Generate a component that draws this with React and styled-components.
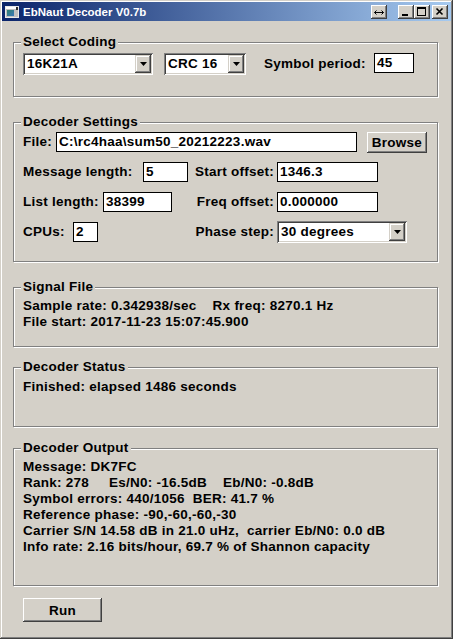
import React from 'react';
import styled, { createGlobalStyle } from 'styled-components';

const Global = createGlobalStyle`
  html, body { margin: 0; padding: 0; background: #d4d0c8; }
  body { font-family: "Liberation Sans", Arial, sans-serif; }
  * { box-sizing: border-box; }
`;

const Window = styled.div`
  width: 453px;
  height: 639px;
  background: #d4d0c8;
  padding: 2px;
  box-shadow: inset -1px -1px 0 #404040, inset 1px 1px 0 #d4d0c8,
    inset -2px -2px 0 #808080, inset 2px 2px 0 #ffffff;
  display: flex;
  flex-direction: column;
  font: bold 13.5px "Liberation Sans", Arial, sans-serif;
  letter-spacing: 0.25px;
  color: #000;
`;

const TitleBar = styled.div`
  height: 19px;
  flex-shrink: 0;
  background: linear-gradient(to right, #0a246a, #a6caf0);
  display: flex;
  align-items: center;
  padding: 0 3px 0 2px;
`;

const TitleText = styled.div`
  flex: 1;
  margin-left: 3px;
  color: #fff;
  font-size: 11.5px;
  letter-spacing: 0;
  white-space: nowrap;
`;

const CapBtn = styled.div`
  width: 16px;
  height: 14px;
  flex-shrink: 0;
  background: #d4d0c8;
  box-shadow: inset -1px -1px 0 #404040, inset 1px 1px 0 #ffffff,
    inset -2px -2px 0 #808080;
  margin-right: ${(p) => p.$gap || 0}px;
  display: flex;
`;

const Client = styled.div`
  flex: 1;
  padding: 0 13px 0 11px;
  display: flex;
  flex-direction: column;
`;

const Group = styled.div`
  position: relative;
  flex-shrink: 0;
  height: ${(p) => p.$h}px;
  margin-top: ${(p) => p.$mt}px;
  border: 1px solid #808080;
  box-shadow: inset 1px 1px 0 #fff, 1px 1px 0 #fff;
  padding: ${(p) => p.$pt}px 9px 0 9px;
`;

const Legend = styled.span`
  position: absolute;
  top: -9px;
  left: 7px;
  padding: 0 2px;
  background: #d4d0c8;
  line-height: 16px;
  white-space: nowrap;
`;

const Row = styled.div`
  display: flex;
  align-items: ${(p) => p.$align || 'center'};
  height: ${(p) => (p.$h ? `${p.$h}px` : 'auto')};
`;

const Cell = styled.div`
  display: flex;
  align-items: center;
  width: ${(p) => p.$w}px;
  flex-shrink: 0;
`;

const Label = styled.span`
  flex-shrink: 0;
  width: ${(p) => (p.$w ? `${p.$w}px` : 'auto')};
  margin-left: ${(p) => p.$ml || 0}px;
  margin-right: ${(p) => p.$mr || 0}px;
  text-align: ${(p) => (p.$right ? 'right' : 'left')};
  line-height: ${(p) => p.$lh || 16}px;
  white-space: pre;
`;

const TextBox = styled.div`
  width: ${(p) => p.$w}px;
  height: 20px;
  flex-shrink: 0;
  border: 1px solid #000;
  background: #fff;
  padding-left: 2px;
  line-height: 18px;
  white-space: nowrap;
  overflow: hidden;
`;

const Combo = styled.div`
  width: ${(p) => p.$w}px;
  height: 22px;
  flex-shrink: 0;
  margin-left: ${(p) => p.$ml || 0}px;
  background: #fff;
  padding: 2px;
  box-shadow: inset 1px 1px 0 #808080, inset -1px -1px 0 #fff,
    inset 2px 2px 0 #404040, inset -2px -2px 0 #d4d0c8;
  display: flex;
  align-items: center;
`;

const ComboText = styled.span`
  flex: 1;
  padding-left: 2px;
  line-height: 18px;
  white-space: nowrap;
`;

const ComboArrow = styled.div`
  width: 16px;
  height: 18px;
  flex-shrink: 0;
  background: #d4d0c8;
  box-shadow: inset -1px -1px 0 #404040, inset 1px 1px 0 #d4d0c8,
    inset -2px -2px 0 #808080, inset 2px 2px 0 #fff;
  display: flex;
  align-items: center;
  justify-content: center;
`;

const PushButton = styled.div`
  width: ${(p) => p.$w}px;
  height: ${(p) => p.$h}px;
  flex-shrink: 0;
  margin-left: ${(p) => p.$ml || 0}px;
  margin-top: ${(p) => p.$mt || 0}px;
  background: #d4d0c8;
  box-shadow: inset -1px -1px 0 #404040, inset 1px 1px 0 #ffffff,
    inset -2px -2px 0 #808080;
  display: flex;
  align-items: center;
  justify-content: center;
  white-space: nowrap;
`;

const Line = styled.div`
  line-height: 16px;
  white-space: pre;
`;

const AppIcon = () => (
  <svg width="16" height="16" viewBox="0 0 16 16">
    <rect x="1.5" y="2.5" width="13" height="11" fill="#c0c0c0" stroke="#e8e8e8" />
    <rect x="2" y="3" width="12" height="2" fill="#ffffff" />
    <defs>
      <linearGradient id="ig" x1="0" y1="0" x2="1" y2="1">
        <stop offset="0" stopColor="#2f7f6f" />
        <stop offset="1" stopColor="#3a78b8" />
      </linearGradient>
    </defs>
    <rect x="3" y="6" width="7" height="6" fill="url(#ig)" />
    <rect x="12" y="3" width="2" height="3" fill="#303030" />
  </svg>
);

const ArrowDown = () => (
  <svg width="7" height="4" viewBox="0 0 7 4">
    <polygon points="0,0 7,0 3.5,4" fill="#000" />
  </svg>
);

const GlyphResize = () => (
  <svg width="16" height="14" viewBox="0 0 16 14">
    <path d="M3.5 7.5h9" stroke="#000" strokeWidth="1" />
    <path d="M5.5 5.5L3.5 7.5L5.5 9.5M10.5 5.5L12.5 7.5L10.5 9.5" stroke="#000" strokeWidth="1" fill="none" />
  </svg>
);

const GlyphMin = () => (
  <svg width="16" height="14" viewBox="0 0 16 14">
    <rect x="4" y="9" width="6" height="2" fill="#000" />
  </svg>
);

const GlyphMax = () => (
  <svg width="16" height="14" viewBox="0 0 16 14">
    <rect x="3.5" y="2.5" width="8" height="8" fill="none" stroke="#000" />
    <rect x="3" y="2" width="9" height="2" fill="#000" />
  </svg>
);

const GlyphClose = () => (
  <svg width="16" height="14" viewBox="0 0 16 14">
    <path d="M4.5 3.5L10.5 9.5M10.5 3.5L4.5 9.5" stroke="#000" strokeWidth="1.6" />
  </svg>
);

export default function App() {
  return (
    <>
      <Global />
      <Window>
        <TitleBar>
          <AppIcon />
          <TitleText>EbNaut Decoder V0.7b</TitleText>
          <CapBtn $gap={11}><GlyphResize /></CapBtn>
          <CapBtn><GlyphMin /></CapBtn>
          <CapBtn $gap={2}><GlyphMax /></CapBtn>
          <CapBtn><GlyphClose /></CapBtn>
        </TitleBar>
        <Client>
          <Group $mt={21} $h={55} $pt={10}>
            <Legend>Select Coding</Legend>
            <Row $align="flex-start">
              <Combo $w={130}>
                <ComboText>16K21A</ComboText>
                <ComboArrow><ArrowDown /></ComboArrow>
              </Combo>
              <Combo $w={82} $ml={11}>
                <ComboText>CRC 16</ComboText>
                <ComboArrow><ArrowDown /></ComboArrow>
              </Combo>
              <Label $w={110} $ml={18} $lh={21}>Symbol period:</Label>
              <TextBox $w={40}>45</TextBox>
            </Row>
          </Group>

          <Group $mt={25} $h={140} $pt={4}>
            <Legend>Decoder Settings</Legend>
            <Row $h={30}>
              <Label $w={33}>File:</Label>
              <TextBox $w={301}>C:\rc4haa\sum50_20212223.wav</TextBox>
              <PushButton $w={60} $h={21} $ml={10}>Browse</PushButton>
            </Row>
            <Row $h={30}>
              <Cell $w={167}>
                <Label $w={120}>Message length:</Label>
                <TextBox $w={45}>5</TextBox>
              </Cell>
              <Label $w={84} $mr={3} $right>Start offset:</Label>
              <TextBox $w={101}>1346.3</TextBox>
            </Row>
            <Row $h={30}>
              <Cell $w={167}>
                <Label $w={80}>List length:</Label>
                <TextBox $w={69}>38399</TextBox>
              </Cell>
              <Label $w={84} $mr={3} $right>Freq offset:</Label>
              <TextBox $w={101}>0.000000</TextBox>
            </Row>
            <Row $h={30}>
              <Cell $w={167}>
                <Label $w={50}>CPUs:</Label>
                <TextBox $w={25}>2</TextBox>
              </Cell>
              <Label $w={84} $mr={3} $right>Phase step:</Label>
              <Combo $w={130}>
                <ComboText>30 degrees</ComboText>
                <ComboArrow><ArrowDown /></ComboArrow>
              </Combo>
            </Row>
          </Group>

          <Group $mt={25} $h={60} $pt={10}>
            <Legend>Signal File</Legend>
            <Line>{'Sample rate: 0.342938/sec    Rx freq: 8270.1 Hz'}</Line>
            <Line>File start: 2017-11-23 15:07:45.900</Line>
          </Group>

          <Group $mt={20} $h={60} $pt={11}>
            <Legend>Decoder Status</Legend>
            <Line>Finished: elapsed 1486 seconds</Line>
          </Group>

          <Group $mt={21} $h={138} $pt={10}>
            <Legend>Decoder Output</Legend>
            <Line>Message: DK7FC</Line>
            <Line>{'Rank: 278     Es/N0: -16.5dB    Eb/N0: -0.8dB'}</Line>
            <Line>{'Symbol errors: 440/1056  BER: 41.7 %'}</Line>
            <Line>Reference phase: -90,-60,-60,-30</Line>
            <Line>{'Carrier S/N 14.58 dB in 21.0 uHz,  carrier Eb/N0: 0.0 dB'}</Line>
            <Line>Info rate: 2.16 bits/hour, 69.7 % of Shannon capacity</Line>
          </Group>

          <PushButton $w={79} $h={24} $ml={10} $mt={12}>Run</PushButton>
        </Client>
      </Window>
    </>
  );
}
